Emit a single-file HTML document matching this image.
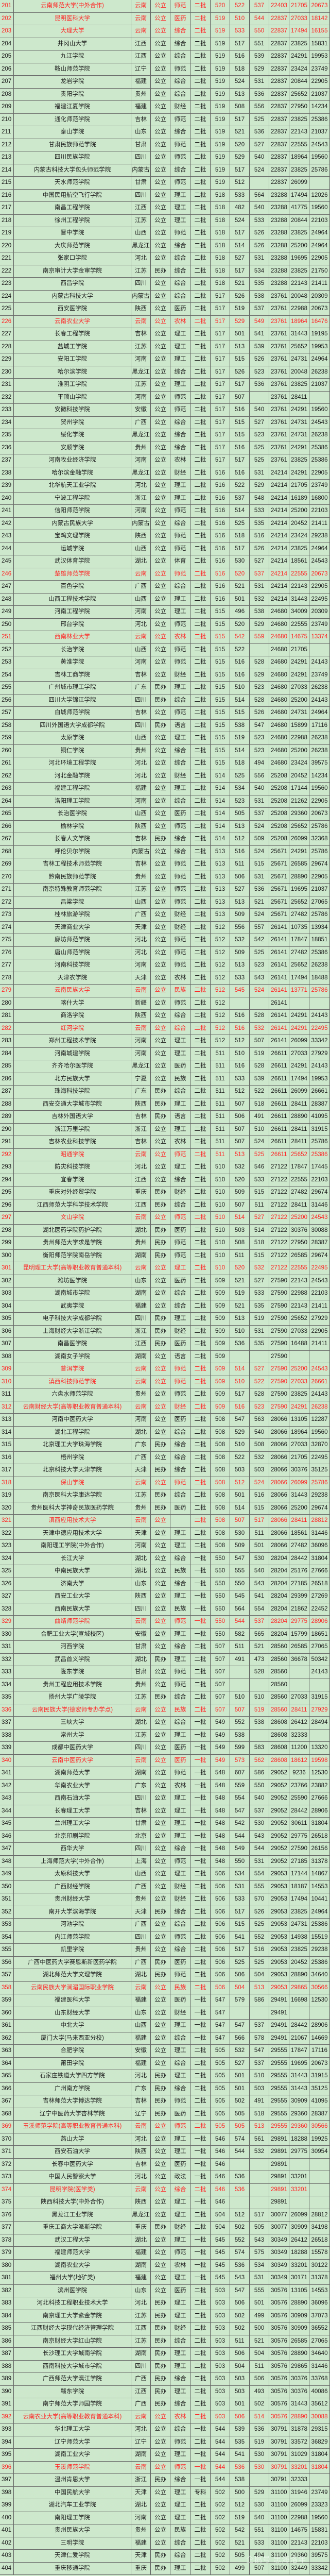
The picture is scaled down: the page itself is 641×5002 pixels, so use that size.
<!DOCTYPE html>
<html><head><meta charset="utf-8"><style>
*{margin:0;padding:0;box-sizing:border-box}
html,body{width:641px;height:5002px;background:#cde8cc;overflow:hidden}
body{font-family:"Liberation Sans","Noto Sans CJK SC",sans-serif;font-size:11.5px;color:#1c1c1c;position:relative}
#t{position:absolute;left:0;top:0;width:641px;height:5002px;overflow:hidden}
.r{position:absolute;left:0;width:641px;display:flex;height:24.5px;border-bottom:1px solid #6a6a6a;line-height:23px;white-space:nowrap;overflow:hidden}
.r span{border-right:1px solid #5a5a5a;text-align:center;overflow:hidden;flex:none;height:100%}
.r span:nth-child(1){width:27px;text-align:left;padding-left:3px}
.r span:nth-child(2){width:228px}
.r span:nth-child(3){width:38px}
.r span:nth-child(4){width:38px}
.r span:nth-child(5){width:39px}
.r span:nth-child(6){width:39px}
.r span:nth-child(7){width:38px}
.r span:nth-child(8){width:38px}
.r span:nth-child(9){width:38px}
.r span:nth-child(10){width:39px}
.r span:nth-child(11){width:39px}
.r span:nth-child(12){width:40px}
.r.red{color:#ff2626}
.wm{position:absolute;left:478px;top:4960px;font-size:15px;line-height:18px;color:rgba(255,255,255,0.55);letter-spacing:1px}
</style></head><body>
<div id="t"></div>
<div class="wm">企鹅号 忠海洛年</div>
<script>
var d=`*201|云南师范大学(中外合作)|云南|公立|师范|二批|520|522|537|22403|21705|20673
*202|昆明医科大学|云南|公立|医药|二批|519|510|544|22837|27033|18142
*203|大理大学|云南|公立|综合|二批|519|533|550|22837|17494|16155
204|井冈山大学|江西|公立|综合|二批|519|517|551|22837|23825|15831
205|九江学院|江西|公立|综合|二批|519|516|539|22837|24291|19953
206|鞍山师范学院|辽宁|公立|师范|二批|519|518|529|22837|23424|23749
207|龙岩学院|福建|公立|综合|二批|519|524|531|22837|20844|22905
208|贵阳学院|贵州|公立|综合|二批|519|513|536|22837|25652|21037
209|福建江夏学院|福建|公立|财经|二批|519|508|556|22837|27950|14234
210|通化师范学院|吉林|公立|师范|二批|519|517|525|22837|23825|25386
211|泰山学院|山东|公立|综合|二批|519|521|536|22837|22143|21037
212|甘肃民族师范学院|甘肃|公立|师范|二批|519|520|527|22837|22555|24543
213|四川民族学院|四川|公立|师范|二批|519|529|540|22837|18964|19560
214|内蒙古科技大学包头师范学院|内蒙古|公立|综合|二批|519|517|524|22837|23825|25786
215|天水师范学院|甘肃|公立|师范|二批|519|512||22837|26099|
216|中国民用航空飞行学院|四川|公立|理工|二批|518|533|564|23288|17494|12026
217|南昌工程学院|江西|公立|理工|二批|518|482|540|23288|41775|19560
218|徐州工程学院|江苏|公立|理工|二批|518|524|533|23288|20844|22103
219|晋中学院|山西|公立|师范|二批|518|517|526|23288|23825|24964
220|大庆师范学院|黑龙江|公立|综合|二批|518|514|526|23288|25200|24964
221|张家口学院|河北|公立|综合|二批|518|527|531|23288|19695|22905
222|南京审计大学金审学院|江苏|民办|综合|二批|518|517|534|23288|23825|21750
223|西昌学院|四川|公立|综合|二批|518|521|535|23288|22143|21411
224|内蒙古科技大学|内蒙古|公立|综合|二批|517|526|538|23761|20048|20309
225|西安医学院|陕西|公立|医药|二批|517|519|537|23761|22988|20673
*226|云南农业大学|云南|公立|农林|二批|517|529|549|23761|18964|16476
227|长春工程学院|吉林|公立|理工|二批|517|501|541|23761|31443|19195
228|盐城工学院|江苏|公立|理工|二批|517|513|539|23761|25652|19953
229|安阳工学院|河南|公立|理工|二批|517|515|526|23761|24731|24964
230|哈尔滨学院|黑龙江|公立|综合|二批|517|526|523|23761|20048|26238
231|淮阴工学院|江苏|公立|理工|二批|517|517|536|23761|23825|21037
232|平顶山学院|河南|公立|师范|二批|517|507||23761|28411|
233|安徽科技学院|安徽|公立|师范|二批|517|516|540|23761|24291|19560
234|贺州学院|广西|公立|综合|二批|517|515|527|23761|24731|24543
235|绥化学院|黑龙江|公立|综合|二批|517|515|523|23761|24731|26238
236|安顺学院|贵州|公立|综合|二批|517|516|525|23761|24291|25386
237|河南牧业经济学院|河南|公立|农林|二批|517|517|525|23761|23825|25386
238|哈尔滨金融学院|黑龙江|公立|财经|二批|516|516|531|24214|24291|22905
239|北华航天工业学院|河北|公立|理工|二批|516|522|529|24214|21705|23749
240|宁波工程学院|浙江|公立|理工|二批|516|537|548|24214|16189|16800
241|信阳师范学院|河南|公立|师范|二批|516|514|533|24214|25200|22103
242|内蒙古民族大学|内蒙古|公立|综合|二批|516|525|535|24214|20452|21411
243|宝鸡文理学院|陕西|公立|师范|二批|516|518|516|24214|23424|29238
244|运城学院|山西|公立|师范|二批|516|517|526|24214|23825|24964
245|武汉体育学院|湖北|公立|体育|二批|516|530|527|24214|18561|24543
*246|楚雄师范学院|云南|公立|师范|二批|516|520|537|24214|22555|20673
247|百色学院|广西|公立|综合|二批|516|521|531|24214|22143|22905
248|山西工程技术学院|山西|公立|理工|二批|516|501|532|24214|31443|22495
249|河南工程学院|河南|公立|理工|二批|515|496|538|24680|34009|20309
250|邢台学院|河北|公立|师范|二批|515|520|529|24680|22555|23749
*251|西南林业大学|云南|公立|农林|二批|515|542|559|24680|14675|13374
252|长治学院|山西|公立|师范|二批|515|522||24680|21705|
253|黄淮学院|河南|公立|师范|二批|515|516|528|24680|24291|24143
254|吉林工商学院|吉林|公立|财经|二批|515|516|529|24680|24291|23749
255|广州城市理工学院|广东|民办|理工|二批|515|510|523|24680|27033|26238
256|四川大学锦江学院|四川|民办|综合|二批|515|514|528|24680|25200|24143
257|白城师范学院|吉林|公立|师范|二批|515|515|526|24680|24731|24964
258|四川外国语大学成都学院|四川|民办|语言|二批|515|538|547|24680|15899|17116
259|太原学院|山西|公立|理工|二批|515|519|523|24680|22988|26238
260|铜仁学院|贵州|公立|综合|二批|515|514|523|24680|25200|26238
261|河北环境工程学院|河北|公立|综合|二批|515|518|494|24680|23424|39575
262|河北金融学院|河北|公立|财经|二批|514|525|556|25208|20452|14234
263|福建工程学院|福建|公立|理工|二批|514|534|540|25208|17144|19560
264|洛阳理工学院|河南|公立|综合|二批|514|523|531|25208|21262|22905
265|长治医学院|山西|公立|医药|二批|514|505|537|25208|29360|20673
266|榆林学院|陕西|公立|师范|二批|514|513|524|25208|25652|25786
267|长春人文学院|吉林|民办|综合|二批|514|512|509|25208|26099|32368
268|呼伦贝尔学院|内蒙古|公立|综合|二批|513|516|524|25671|24291|25786
269|吉林工程技术师范学院|吉林|公立|师范|二批|513|511|515|25671|26585|29674
270|黔南民族师范学院|贵州|公立|师范|二批|513|506|531|25671|28890|22905
271|南京特殊教育师范学院|江苏|公立|师范|二批|513|527|536|25671|19695|21037
272|吕梁学院|山西|公立|师范|二批|513|513|521|25671|25652|27065
273|桂林旅游学院|广西|公立|财经|二批|513|509|524|25671|27482|25786
274|天津商业大学|天津|公立|财经|二批|512|556|557|26141|10735|13934
275|廊坊师范学院|河北|公立|师范|二批|512|532|542|26141|17847|18851
276|唐山师范学院|河北|公立|师范|二批|512|509|525|26141|27482|25386
277|河南科技学院|河南|公立|师范|二批|512|513|523|26141|25652|26238
278|天津农学院|天津|公立|农林|二批|512|533|543|26141|17494|18488
*279|云南民族大学|云南|公立|民族|二批|512|545|524|26141|13771|25786
280|喀什大学|新疆|公立|师范|二批|512|||26141||
281|商洛学院|陕西|公立|综合|二批|512|516|528|26141|24291|24143
*282|红河学院|云南|公立|综合|二批|512|516|532|26141|24291|22495
283|郑州工程技术学院|河南|公立|理工|二批|512|512|507|26141|26099|33342
284|河南城建学院|河南|公立|理工|二批|511|510|519|26611|27033|27929
285|齐齐哈尔医学院|黑龙江|公立|医药|二批|511|516|528|26611|24291|24143
286|北方民族大学|宁夏|公立|民族|二批|511|533|539|26611|17494|19953
287|珠海科技学院|广东|民办|综合|二批|511|512|522|26611|26099|26661
288|西安交通大学城市学院|陕西|民办|理工|二批|511|507|518|26611|28411|28387
289|吉林外国语大学|吉林|民办|语言|二批|511|506|491|26611|28890|41095
290|浙江万里学院|浙江|公立|理工|二批|511|507|510|26611|28411|31915
291|吉林农业科技学院|吉林|公立|农林|二批|511|507|524|26611|28411|25786
*292|昭通学院|云南|公立|师范|二批|511|513|525|26611|25652|25386
293|防灾科技学院|河北|公立|理工|二批|510|532|546|27122|17847|17445
294|宜春学院|江西|公立|综合|二批|510|520|533|27122|22555|22103
295|重庆对外经贸学院|重庆|民办|财经|二批|510|509|515|27122|27482|29674
296|江西师范大学科学技术学院|江西|民办|综合|二批|510|507|511|27122|28411|31446
*297|文山学院|云南|公立|师范|二批|510|514|527|27122|25200|24543
298|湖北医药学院药护学院|湖北|民办|医药|二批|510|503|514|27122|30376|30088
299|贵州师范大学求是学院|贵州|民办|师范|二批|510|508|518|27122|27950|28387
300|衡阳师范学院南岳学院|湖南|民办|师范|二批|510|511|515|27122|26585|29674
*301|昆明理工大学(高等职业教育普通本科)|云南|公立|理工|二批|510|520|532|27122|22555|22495
302|潍坊医学院|山东|公立|医药|二批|509|521|527|27590|22143|24543
303|湖南城市学院|湖南|公立|综合|二批|509|519|533|27590|22988|22103
304|武夷学院|福建|公立|综合|二批|509|521|535|27590|22143|21411
305|电子科技大学成都学院|四川|民办|理工|二批|509|513|519|27590|25652|27929
306|上海财经大学浙江学院|浙江|民办|财经|二批|509|510|531|27590|27033|22905
307|南昌医学院|江西|民办|医药|二批|509|536|535|27590|16488|21411
308|湖南女子学院|湖南|公立|语言|二批|509|||27590||
*309|普洱学院|云南|公立|师范|二批|509|514|527|27590|25200|24543
*310|滇西科技师范学院|云南|公立|师范|二批|509|510|522|27590|27033|26661
311|六盘水师范学院|贵州|公立|师范|二批|509|517|528|27590|23825|24143
*312|云南财经大学(高等职业教育普通本科)|云南|公立|财经|二批|509|516|523|27590|24291|26238
313|河南中医药大学|河南|公立|医药|二批|508|547|563|28066|13105|12287
314|湖北工程学院|湖北|公立|综合|二批|508|529|540|28066|18964|19560
315|北京理工大学珠海学院|广东|民办|综合|二批|508|510|508|28066|27033|32870
316|梧州学院|广西|公立|综合|二批|508|522|532|28066|21705|22495
317|北京科技大学天津学院|天津|民办|综合|二批|508|503|503|28066|30376|35125
*318|保山学院|云南|公立|师范|二批|508|512|524|28066|26099|25786
319|南京医科大学康达学院|江苏|民办|综合|二批|508|501|516|28066|31443|29238
320|贵州医科大学神奇民族医药学院|贵州|民办|医药|二批|508|514|515|28066|25200|29674
*321|滇西应用技术大学|云南|公立||二批|508|507|517|28066|28411|28812
322|天津中德应用技术大学|天津|公立|理工|二批|508|530|511|28066|18561|31446
323|南阳理工学院(中外合作)|河南|公立|理工|二批|508|509|501|28066|27482|36096
324|长江大学|湖北|公立|综合|一批|550|547|530|28204|28442|31804
325|中南民族大学|湖北|公立|民族|一批|550|555|540|28204|25176|27666
326|济南大学|山东|公立|综合|一批|550|550|543|28204|27185|26518
327|西安工业大学|陕西|公立|理工|一批|550|545|541|28204|29399|27269
328|西南民族大学|四川|公立|民族|一批|550|564|554|28204|21862|22452
*329|曲靖师范学院|云南|公立|师范|一批|550|544|537|28204|29775|28906
330|合肥工业大学(宣城校区)|安徽|公立|理工|一批|550|582|565|28204|15799|18651
331|河西学院|甘肃|公立|综合|二批|507|511|521|28560|26585|27065
332|武昌首义学院|湖北|民办|理工|二批|507|491|473|28560|36678|50342
333|陇东学院|甘肃|公立|师范|二批|507||528|28560||24143
334|贵州工程应用技术学院|贵州|公立|师范|二批|507|||28560||
335|扬州大学广陵学院|江苏|民办|综合|二批|507|510|510|28560|27033|31915
*336|云南民族大学(德宏师专办学点)|云南|公立|民族|二批|507|507|519|28560|28411|27929
337|三峡大学|湖北|公立|综合|一批|549|552|538|28608|26412|28494
338|常州大学|江苏|公立|理工|一批|549|538||28608|32333|
339|成都中医药大学|四川|公立|医药|一批|549|599|583|28608|11200|13320
*340|云南中医药大学|云南|公立|医药|一批|549|573|562|28608|18612|19598
341|湖南师范大学|湖南|公立|师范|一批|548|607|586|29052|9236|12530
342|华南农业大学|广东|公立|农林|一批|548|559|550|29052|23766|23882
343|西南石油大学|四川|公立|理工|一批|548|554|540|29052|25590|27666
344|长春理工大学|吉林|公立|理工|一批|548|547|537|29052|28442|28906
345|兰州理工大学|甘肃|公立|理工|一批|548|542|530|29052|30611|31804
346|北京印刷学院|北京|公立|理工|一批|548|544|543|29052|29775|26518
347|西华大学|四川|公立|综合|一批|548|549|544|29052|27590|26156
348|上海师范大学(中外合作)|上海|公立|师范|一批|548|550|531|29052|27185|31378
349|太原科技大学|山西|公立|理工|二批|506|534|554|29053|17144|14867
350|广西财经学院|广西|公立|财经|二批|506|531|555|29053|18187|14553
351|贵州财经大学|贵州|公立|财经|二批|506|533|570|29053|17494|10441
352|南开大学滨海学院|天津|民办|综合|二批|506|517|526|29053|23825|24964
353|河池学院|广西|公立|综合|二批|506|515|525|29053|24731|25386
354|内江师范学院|四川|公立|师范|二批|506|541|552|29053|14938|15519
355|凯里学院|贵州|公立|综合|二批|506|517|516|29053|23825|29238
356|广西中医药大学赛恩斯新医药学院|广西|民办|医药|二批|506|525|525|29053|20452|25386
357|湖北师范大学文理学院|湖北|民办|师范|二批|506|506|504|29053|28890|34640
*358|云南民族大学澜湄国际职业学院|云南|公立|民族|二批|506|504|513|29053|29865|30566
359|福建医科大学|福建|公立|医药|一批|547|579|586|29491|16698|12530
360|山东财经大学|山东|公立|财经|一批|547|||29491||
361|中北大学|山西|公立|理工|一批|547|547|537|29491|28442|28906
362|厦门大学(马来西亚分校)|福建|公立|综合|一批|547|566|578|29491|21067|14669
363|合肥学院|安徽|公立|理工|二批|505|532|547|29555|17847|17116
364|莆田学院|福建|公立|综合|二批|505|527|537|29555|19695|20673
365|石家庄铁道大学四方学院|河北|民办|理工|二批|505|501|510|29555|31443|31915
366|广州南方学院|广东|民办|综合|二批|505|501|503|29555|31443|35125
367|吉林师范大学博达学院|吉林|民办|师范|二批|505|502|491|29555|30909|41095
368|辽宁中医药大学杏林学院|辽宁|民办|医药|二批|505|505|518|29555|29360|28387
*369|玉溪师范学院(高等职业教育普通本科)|云南|公立|师范|二批|505|505|513|29555|29360|30566
370|燕山大学|河北|公立|理工|一批|546|574|561|29891|18288|19925
371|西安石油大学|陕西|公立|理工|一批|546|544|532|29891|29775|30954
372|长春中医药大学|吉林|公立|医药|一批|546|||29891||
373|中国人民警察大学|河北|公立|政法|一批|546|536||29891|33201|
*374|昆明学院(医学类)|云南|公立|综合|二批|546|536||29891|33201|
375|陕西科技大学(中外合作)|陕西|公立|理工|一批|546|||29891||
376|黑龙江工业学院|黑龙江|公立|理工|二批|504|512|517|30077|26099|28812
377|重庆工商大学派斯学院|重庆|民办|财经|二批|504|502|505|30077|30909|34198
378|武汉工程大学|湖北|公立|理工|一批|545|552|543|30349|26412|26518
379|福建师范大学|福建|公立|师范|一批|545|574|575|30349|18288|15578
380|湖南农业大学|湖南|公立|农林|一批|545|536|534|30349|33201|30122
381|福州大学(地矿类)|福建|公立|理工|一批|545|543|531|30349|30171|31378
382|滨州医学院|山东|公立|医药|二批|503|547|555|30576|13105|14553
383|河北科技工程职业技术大学|河北|民办|理工|二批|503|506|501|30576|28890|36096
384|南京理工大学紫金学院|江苏|民办|理工|二批|503|502|499|30576|30909|37073
385|江西财经大学现代经济管理学院|江西|民办|财经|二批|503|502|500|30576|30909|36552
386|南京财经大学红山学院|江苏|民办|综合|二批|503|511|521|30576|26585|27065
387|长沙理工大学城南学院|湖南|民办|理工|二批|503|506|504|30576|28890|34640
388|西南科技大学城市学院|四川|民办|理工|二批|503|504|511|30576|29865|31446
389|广西师范大学漓江学院|广西|民办|综合|二批|503|503|506|30576|30376|33768
390|赣东学院|江西|民办|理工|二批|503|503|493|30576|30376|40086
391|南宁师范大学师园学院|广西|民办|综合|二批|503|501|502|30576|31443|35612
*392|云南农业大学(高等职业教育普通本科)|云南|公立|农林|二批|503|506|514|30576|28890|30088
393|华北理工大学|河北|公立|综合|一批|544|539|536|30791|31878|29315
394|辽宁师范大学|辽宁|公立|师范|二批|544|535|519|30791|33572|36829
395|湖南工业大学|湖南|公立|理工|一批|544|541|530|30791|31029|31804
*396|玉溪师范学院|云南|公立|师范|一批|544|536|530|30791|33201|31804
397|温州肯恩大学|浙江|民办|综合|一批|544|538||30791|32333|
398|中国民航大学|天津|公立|理工|专科|502|500|529|31100|31946|23749
399|湖北汽车工业学院|湖北|公立|理工|二批|502|512|530|31100|26099|23323
400|南阳理工学院|河南|公立|理工|二批|502|519|540|31100|22988|19560
401|贵州民族大学|贵州|公立|民族|二批|502|542|551|31100|14675|15831
402|三明学院|福建|公立|综合|二批|502|521|533|31100|22143|22103
403|天津仁爱学院|天津|民办|综合|二批|502|505|494|31100|29360|39575
404|重庆移通学院|重庆|民办|理工|二批|502|499|507|31100|32449|33342`;
var h='';d.split('\n').forEach(function(l,i){var red=l[0]=='*';if(red)l=l.slice(1);var c=l.split('|');h+='<div class="r'+(red?' red':'')+'" style="top:'+(i*24.5)+'px">'+c.map(function(x){return '<span>'+x+'</span>'}).join('')+'</div>';});
document.getElementById('t').innerHTML=h;
</script>
</body></html>
